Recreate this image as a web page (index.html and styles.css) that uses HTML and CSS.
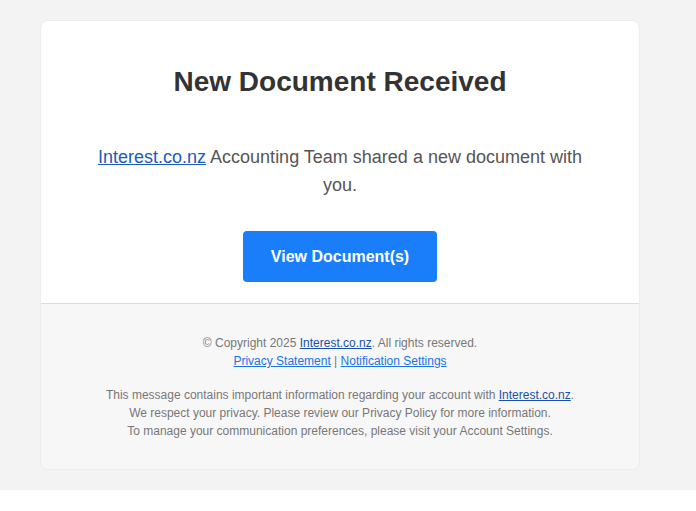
FILE: index.html
```html
<!DOCTYPE html>
<html>
<head>
<meta charset="utf-8">
<link rel="stylesheet" href="styles.css">
</head>
<body>
<div class="page">
  <div class="card">
    <div class="main">
      <h1 class="title">New Document Received</h1>
      <p class="message"><a href="#" class="link">Interest.co.nz</a> Accounting Team shared a new document with you.</p>
      <div class="action"><a href="#" class="button">View Document(s)</a></div>
    </div>
    <div class="footer">
      <p class="footer-block">© Copyright 2025 <a href="#" class="dark-link">Interest.co.nz</a>. All rights reserved.<br>
      <a href="#" class="foot-link">Privacy Statement</a> | <a href="#" class="foot-link">Notification Settings</a></p>
      <p class="footer-block">This message contains important information regarding your account with <a href="#" class="dark-link">Interest.co.nz</a>.<br>
      We respect your privacy. Please review our Privacy Policy for more information.<br>
      To manage your communication preferences, please visit your Account Settings.</p>
    </div>
  </div>
</div>
</body>
</html>
```
FILE: styles.css
```css
html, body {
  margin: 0;
  padding: 0;
  background: #ffffff;
  font-family: "Liberation Sans", Arial, sans-serif;
}
.page {
  background: #f3f3f3;
  padding: 20px 56px 20px 40px;
}
.card {
  width: 600px;
  box-sizing: border-box;
  background: #ffffff;
  border: 1px solid #ececec;
  border-radius: 8px;
  overflow: hidden;
}
.main {
  padding: 45px 40px 21px;
  text-align: center;
}
.title {
  margin: 0;
  font-size: 28px;
  line-height: 32px;
  font-weight: bold;
  color: #333333;
}
.message {
  margin: 45px 0 0;
  font-size: 18px;
  line-height: 28px;
  color: #555555;
}
.link {
  color: #1a5ac2;
  text-decoration: underline;
}
.action {
  margin-top: 32px;
}
.button {
  display: inline-block;
  width: 194px;
  height: 51px;
  line-height: 51px;
  background: #1a7efb;
  color: #ffffff;
  font-size: 16px;
  font-weight: bold;
  text-decoration: none;
  border-radius: 4px;
}
.footer {
  background: #f7f7f7;
  border-top: 1px solid #dddddd;
  padding: 30px 20px 29px;
  text-align: center;
  font-size: 12px;
  line-height: 18px;
  color: #777777;
}
.footer-block {
  margin: 0;
}
.footer-block + .footer-block {
  margin-top: 16px;
}
.dark-link {
  color: #1a4fae;
  text-decoration: underline;
}
.foot-link {
  color: #1a73e8;
  text-decoration: underline;
}
```
